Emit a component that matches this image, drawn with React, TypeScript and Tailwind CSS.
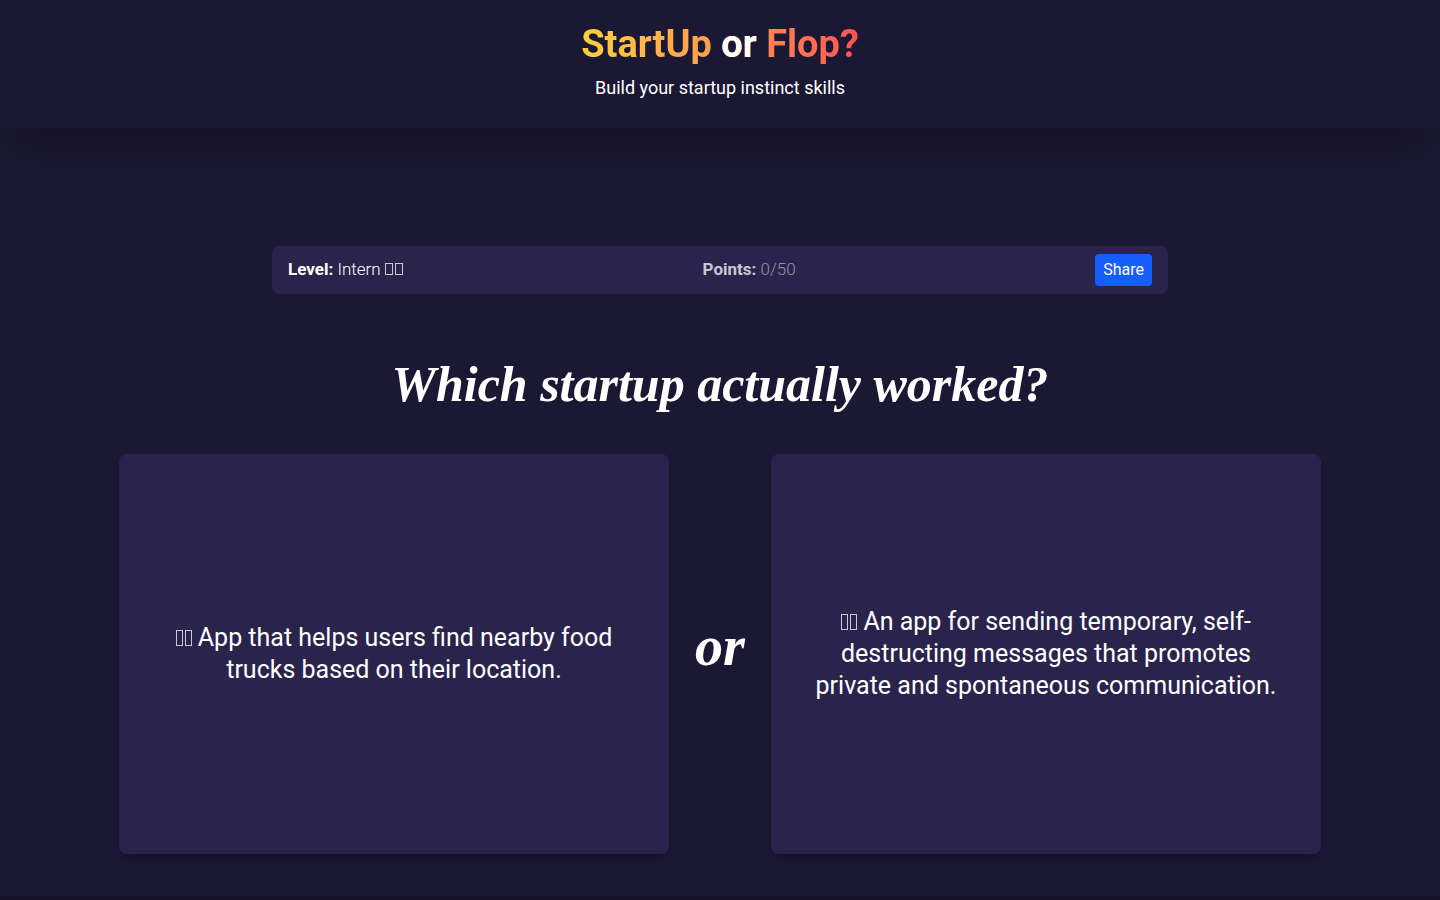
import React, { useState } from 'react';

const LEFT_PITCH = 'App that helps users find nearby food trucks based on their location.';
const RIGHT_PITCH =
  'An app for sending temporary, self-destructing messages that promotes private and spontaneous communication.';

export default function App() {
  const [points, setPoints] = useState(0);

  return (
    <div className="flex min-h-screen flex-col bg-[#1b1833] font-['Roboto',sans-serif] text-white">
      <Header />

      <main className="flex flex-1 flex-col items-center px-4 pt-[118px] pb-10">
        <StatusBar points={points} />

        <h2 className="mt-11 text-center font-['Liberation_Serif',serif] text-[50px] leading-[92px] font-bold italic">
          Which startup actually worked?
        </h2>

        <div className="mt-6 flex w-full max-w-[1202px] items-center justify-between">
          <PitchCard text={LEFT_PITCH} onClick={() => setPoints(points)} />
          <span className="w-[102px] shrink-0 pb-4 text-center font-['Liberation_Serif',serif] text-[56px] leading-[64px] font-black italic">
            or
          </span>
          <PitchCard text={RIGHT_PITCH} onClick={() => setPoints(points + 1)} />
        </div>
      </main>

      <footer className="h-1 bg-[#17142a]" />
    </div>
  );
}

function Header() {
  return (
    <header className="flex h-32 flex-col items-center pt-6 shadow-2xl shadow-black/25">
      <h1 className="bg-gradient-to-r from-[#f9d13e] to-[#ff5252] bg-clip-text text-[38px] leading-10 font-bold text-transparent">
        StartUp <span className="text-white">or</span> Flop?
      </h1>
      <p className="mt-2 text-lg leading-8">Build your startup instinct skills</p>
    </header>
  );
}

function StatusBar({ points }: { points: number }) {
  return (
    <div className="flex h-12 w-full max-w-4xl items-center justify-between rounded-lg bg-[#2a244d] px-4">
      <div className="text-[17px]">
        <strong>Level:</strong> <span className="font-light">Intern</span> <Boxes />
      </div>
      <div className="text-[17px] text-white/75">
        <strong>Points:</strong> <span className="font-light text-white/50">{points}/50</span>
      </div>
      <button className="h-8 rounded bg-[#155dfc] px-2">Share</button>
    </div>
  );
}

function PitchCard({ text, onClick }: { text: string; onClick: () => void }) {
  return (
    <button
      onClick={onClick}
      className="h-[400px] max-w-[550px] flex-1 cursor-pointer rounded-lg bg-[#2a244d] px-10 text-[25px] leading-8 shadow-lg shadow-black/15"
    >
      <Boxes tall /> {text}
    </button>
  );
}

function Boxes({ tall = false }: { tall?: boolean }) {
  const size = tall ? 'h-4 w-[7px]' : 'h-3 w-2';

  return (
    <span aria-hidden="true" className="inline-flex gap-[2px]">
      <span className={`${size} border border-white/75`} />
      <span className={`${size} border border-white/75`} />
    </span>
  );
}
